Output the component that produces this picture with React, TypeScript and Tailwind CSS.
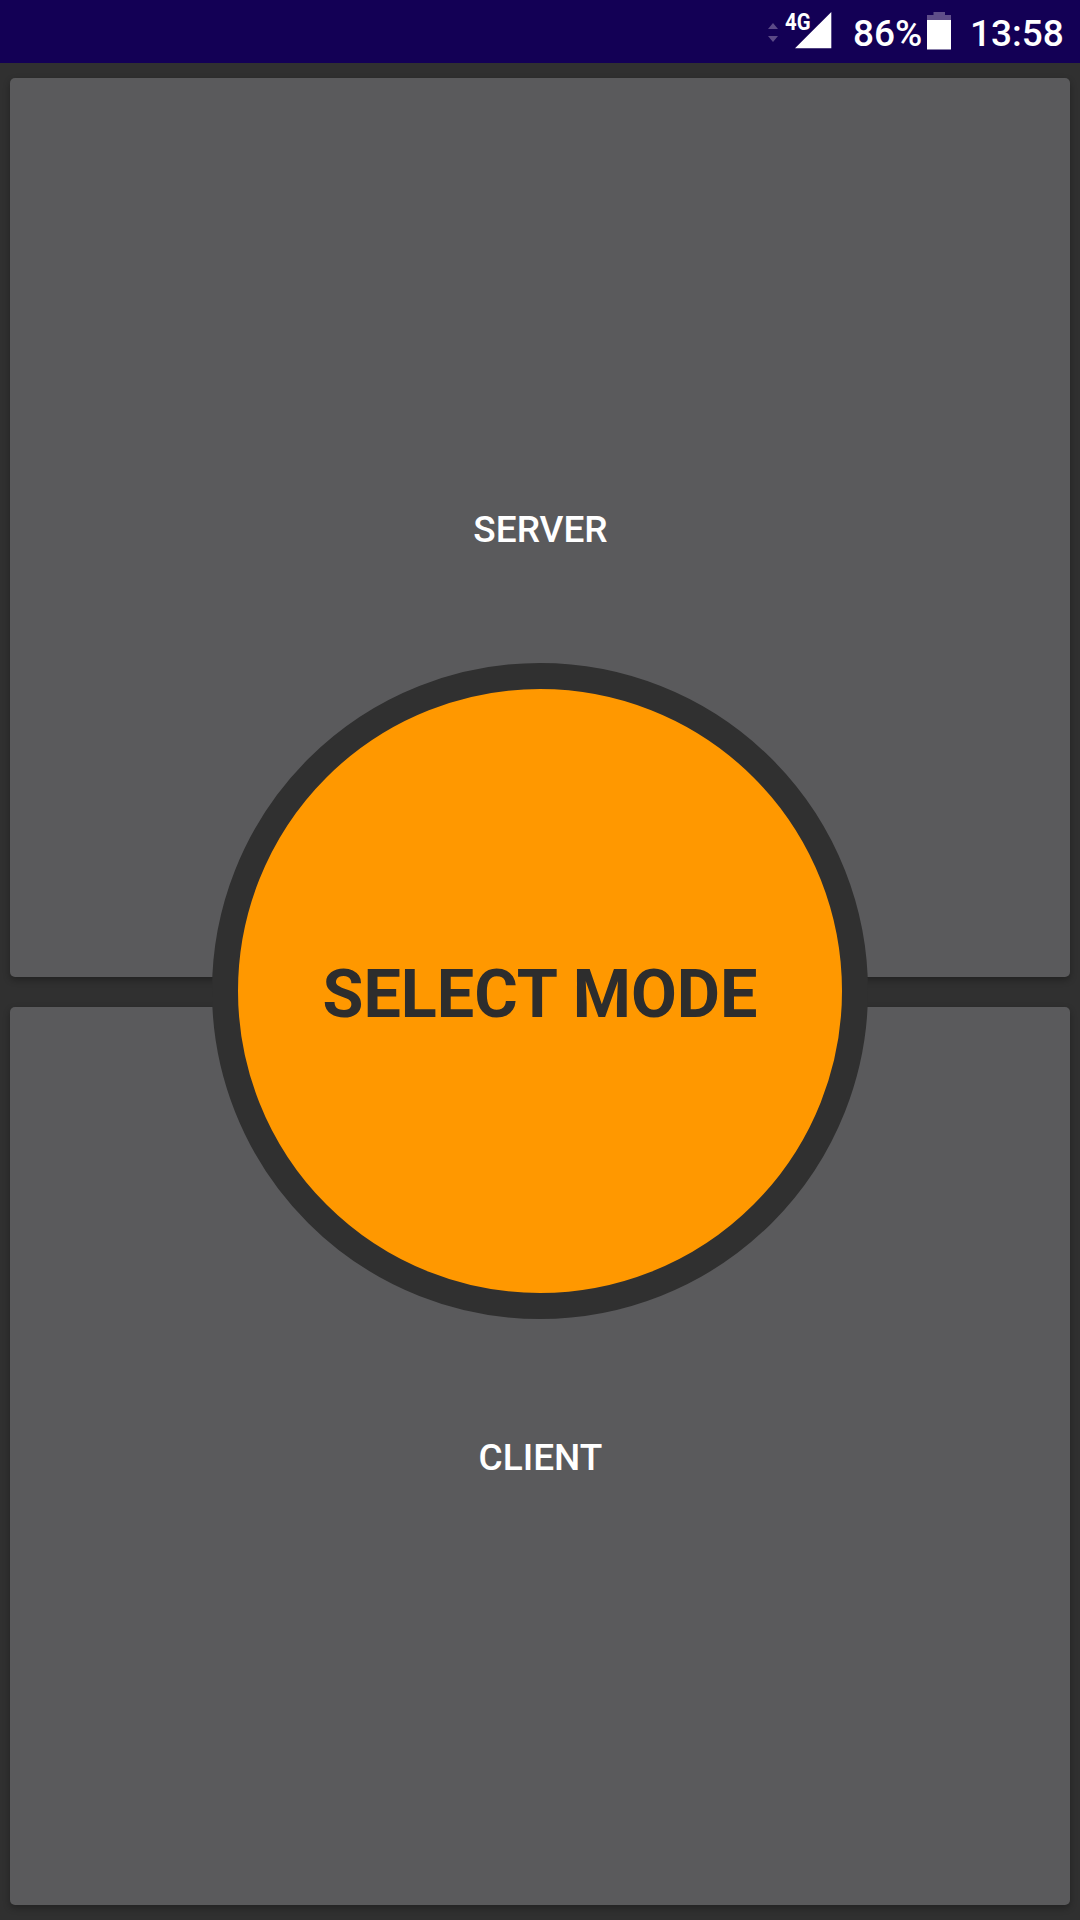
function TrafficIcon() {
  return (
    <svg className="ml-[768px] h-[63px] w-[10px] shrink-0" viewBox="0 0 10 63" fill="#5b4987">
      <path d="M0 29L5 23L10 29ZM0 36H10L5 42Z" />
    </svg>
  );
}

function SignalIcon() {
  return (
    <div className="relative ml-[7px] h-[63px] w-[47px] shrink-0">
      <svg className="h-[63px] w-[47px]" viewBox="0 0 47 63" fill="#fff">
        <path d="M10 48.300L46.300 12V48.300Z" />
      </svg>
      <span className="absolute top-[9px] left-0 origin-left scale-x-[0.830] text-[24.500px] leading-[26px] font-bold">
        4G
      </span>
    </div>
  );
}

function BatteryIcon() {
  return (
    <svg className="h-[63px] w-[24px] shrink-0" viewBox="0 0 24 63">
      <path d="M6.500 12H18V15H24V20H0V15H6.500Z" fill="#5f4e89" />
      <path d="M0 20H24V49.500H0Z" fill="#fff" />
    </svg>
  );
}

function StatusBar() {
  return (
    <header className="flex h-[63px] shrink-0 items-center bg-[#130055] text-[37px] leading-[63px] font-medium text-white">
      <TrafficIcon />
      <SignalIcon />
      <span className="ml-[21px] w-[74px] shrink-0 pt-[3px] whitespace-nowrap">86%</span>
      <BatteryIcon />
      <time className="ml-[19px] pt-[3px] whitespace-nowrap">13:58</time>
    </header>
  );
}

function ModeButton({ label }: { label: string }) {
  return (
    <button className="flex min-h-0 w-full flex-1 items-center justify-center rounded-[5px] bg-[#5a5a5c] pt-[5px] pl-px text-[37px] leading-[44px] font-medium text-white shadow-[0_3px_7px_rgba(0,0,0,0.3)]">
      {label}
    </button>
  );
}

export default function App() {
  return (
    <div className="flex h-[1920px] w-[1080px] flex-col overflow-hidden bg-[#303030] font-['Roboto',sans-serif]">
      <StatusBar />
      <main className="relative flex min-h-0 flex-1 flex-col gap-[30px] px-[10px] pt-[15px] pb-[15px]">
        <ModeButton label="SERVER" />
        <ModeButton label="CLIENT" />
        <div className="absolute top-[600px] left-[212px] flex size-[656px] items-center justify-center rounded-full border-[26px] border-[#303030] bg-[#ff9800]">
          <h1 className="pt-[6px] text-[66.500px] leading-[78px] font-bold whitespace-nowrap text-[#2d2d2d]">SELECT MODE</h1>
        </div>
      </main>
    </div>
  );
}
